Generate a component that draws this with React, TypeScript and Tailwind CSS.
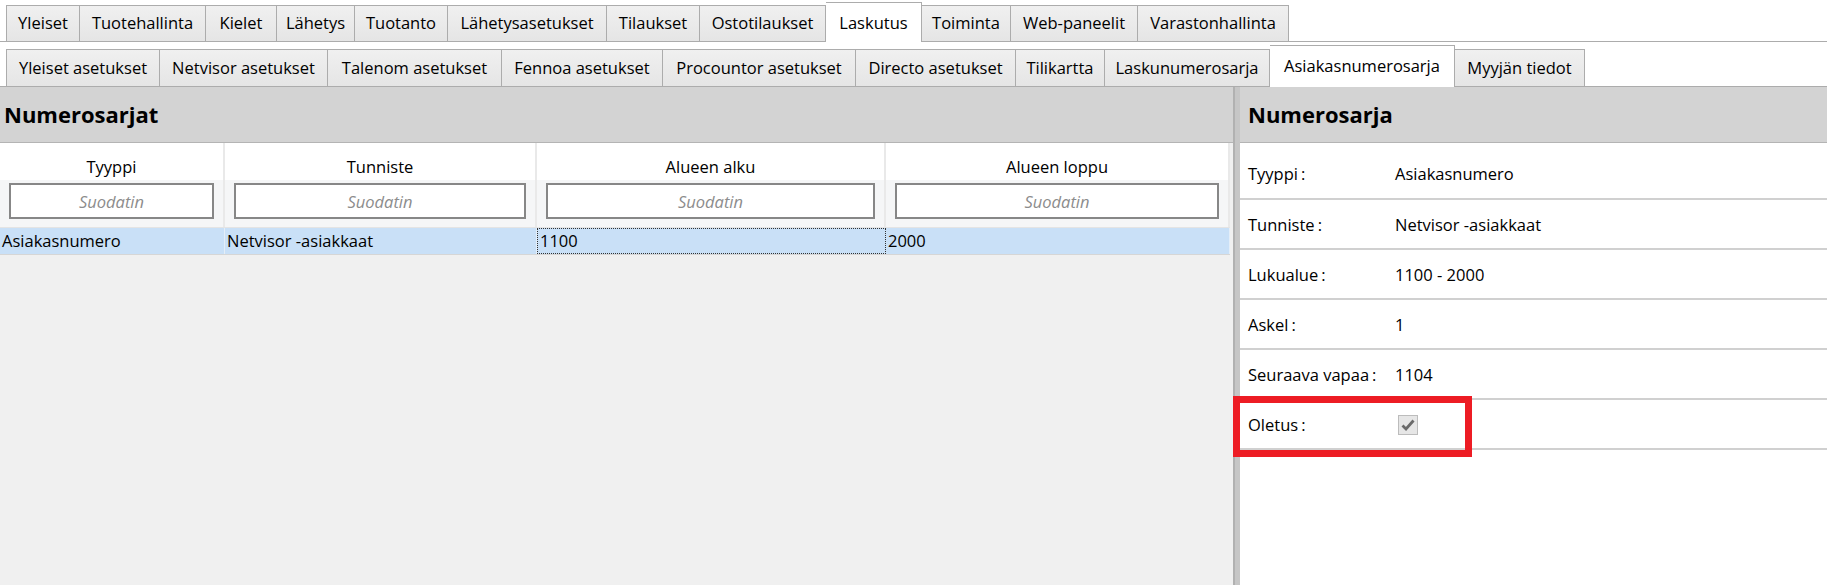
import React from "react";

const tabs1 = [
  { label: "Yleiset", w: "w-[74px]" },
  { label: "Tuotehallinta", w: "w-[126px]" },
  { label: "Kielet", w: "w-[71px]" },
  { label: "Lähetys", w: "w-[78px]" },
  { label: "Tuotanto", w: "w-[93px]" },
  { label: "Lähetysasetukset", w: "w-[159px]" },
  { label: "Tilaukset", w: "w-[93px]" },
  { label: "Ostotilaukset", w: "w-[126px]" },
  { label: "Laskutus", w: "w-[96px]", active: true },
  { label: "Toiminta", w: "w-[89px]" },
  { label: "Web-paneelit", w: "w-[127px]" },
  { label: "Varastonhallinta", w: "w-[151px]" },
];

const tabs2 = [
  { label: "Yleiset asetukset", w: "w-[154px]" },
  { label: "Netvisor asetukset", w: "w-[168px]" },
  { label: "Talenom asetukset", w: "w-[174px]" },
  { label: "Fennoa asetukset", w: "w-[161px]" },
  { label: "Procountor asetukset", w: "w-[193px]" },
  { label: "Directo asetukset", w: "w-[160px]" },
  { label: "Tilikartta", w: "w-[89px]" },
  { label: "Laskunumerosarja", w: "w-[165px]" },
  { label: "Asiakasnumerosarja", w: "w-[185px]", active: true },
  { label: "Myyjän tiedot", w: "w-[130px]" },
];

type Tab = { label: string; w: string; active?: boolean };

function TabRow({ tabs, inactiveH, activeH }: { tabs: Tab[]; inactiveH: string; activeH: string }) {
  return (
    <div className="flex items-end pl-[6px] h-full border-b border-[#acacac]">
      {tabs.map((t, i) => (
        <div
          key={t.label}
          className={
            (t.active
              ? `${activeH} bg-white border-t border-r border-[#acacac] -mb-px relative z-10 items-start pt-[8px] `
              : `${inactiveH} bg-gradient-to-b from-[#f0f0f0] to-[#e5e5e5] border-t border-r border-[#acacac] items-center `) +
            (i === 0 ? "border-l " : "") +
            `${t.w} flex justify-center shrink-0 text-[16.5px] text-black whitespace-nowrap`
          }
        >
          {t.label}
        </div>
      ))}
    </div>
  );
}

const cols = [
  { title: "Tyyppi", w: "w-[225px]", value: "Asiakasnumero" },
  { title: "Tunniste", w: "w-[312px]", value: "Netvisor -asiakkaat" },
  { title: "Alueen alku", w: "w-[349px]", value: "1100", focus: true },
  { title: "Alueen loppu", w: "w-[344px]", value: "2000" },
];

const details = [
  { label: "Tyyppi", value: "Asiakasnumero" },
  { label: "Tunniste", value: "Netvisor -asiakkaat" },
  { label: "Lukualue", value: "1100 - 2000" },
  { label: "Askel", value: "1" },
  { label: "Seuraava vapaa", value: "1104" },
];

export default function App() {
  return (
    <div className="relative w-[1827px] h-[585px] overflow-hidden bg-white font-['Open_Sans',sans-serif] text-black">
      {/* Top tabs */}
      <div className="h-[42px]">
        <TabRow tabs={tabs1} inactiveH="h-[36px]" activeH="h-[40px]" />
      </div>
      <div className="h-[45px]">
        <TabRow tabs={tabs2} inactiveH="h-[37px]" activeH="h-[42px]" />
      </div>

      {/* Main */}
      <div className="flex h-[498px]">
        {/* Left panel */}
        <div className="w-[1233px] flex flex-col bg-[#f0f0f0]">
          <div className="h-[56px] bg-[#d3d3d3] border-b border-[#b4b4b4] flex items-center pl-[4px] text-[22px] font-bold">
            Numerosarjat
          </div>
          <div className="flex">
            {cols.map((c) => (
              <div key={c.title} className={`${c.w} flex flex-col border-r-2 border-[#e9e9e9]`}>
                <div className="h-[37px] bg-white flex justify-center pt-[12px] text-[16.5px] leading-[24px]">
                  {c.title}
                </div>
                <div className="h-[47px] bg-[#f5f6f7] pt-[3px] px-[9px]">
                  <div className="h-[36px] bg-white border-2 border-[#878787] flex items-center justify-center pt-[2px] italic text-[#8c8c8c] text-[16.5px]">
                    Suodatin
                  </div>
                </div>
              </div>
            ))}
          </div>
          <div className="h-px bg-[#e4e4e4] w-[1230px]" />
          <div className="flex w-[1230px] h-[27px] bg-[#c9e0f7] border-b border-[#d6d6d6]">
            {cols.map((c) => (
              <div
                key={c.title}
                className={
                  `${c.w} flex items-center pl-[2px] pt-[1px] text-[16.5px] leading-none ` +
                  (c.focus ? "border border-dotted border-[#333]" : "border-r border-[#e4eef8]")
                }
              >
                {c.value}
              </div>
            ))}
          </div>
        </div>

        {/* Splitter */}
        <div className="w-[7px] bg-[#c6c6c6] border-l-2 border-[#b1b1b1]" />

        {/* Right panel */}
        <div className="flex-1 flex flex-col bg-white">
          <div className="h-[56px] bg-[#d3d3d3] border-b border-[#b4b4b4] flex items-center pl-[8px] text-[22px] font-bold">
            Numerosarja
          </div>
          {details.map((d, i) => (
            <div
              key={d.label}
              className={
                (i === 0 ? "h-[57px] pt-[7px] " : "h-[50px] pt-[2px] ") +
                "flex items-center border-b-2 border-[#d0d0d0] pl-[8px] text-[16.5px]"
              }
            >
              <div className="w-[147px] shrink-0">
                {d.label}
                <span className="ml-[3px]">:</span>
              </div>
              <div>{d.value}</div>
            </div>
          ))}
          <div className="h-[50px] pt-[2px] flex items-center border-b-2 border-[#d0d0d0] pl-[8px] text-[16.5px]">
            <div className="w-[150px] shrink-0">
              Oletus
              <span className="ml-[3px]">:</span>
            </div>
            <div className="w-[20px] h-[20px] bg-[#e6e6e6] border border-[#bcbcbc] flex items-center justify-center">
              <svg width="14" height="12" viewBox="0 0 14 12">
                <path d="M1.5 6.5 L5 10 L12.5 1.5" fill="none" stroke="#6a6a6a" strokeWidth="2.8" />
              </svg>
            </div>
          </div>
        </div>
      </div>

      {/* Red annotation box */}
      <div className="absolute left-[1233px] top-[396px] w-[239px] h-[61px] border-[7px] border-[#ed1c24]" />
    </div>
  );
}
